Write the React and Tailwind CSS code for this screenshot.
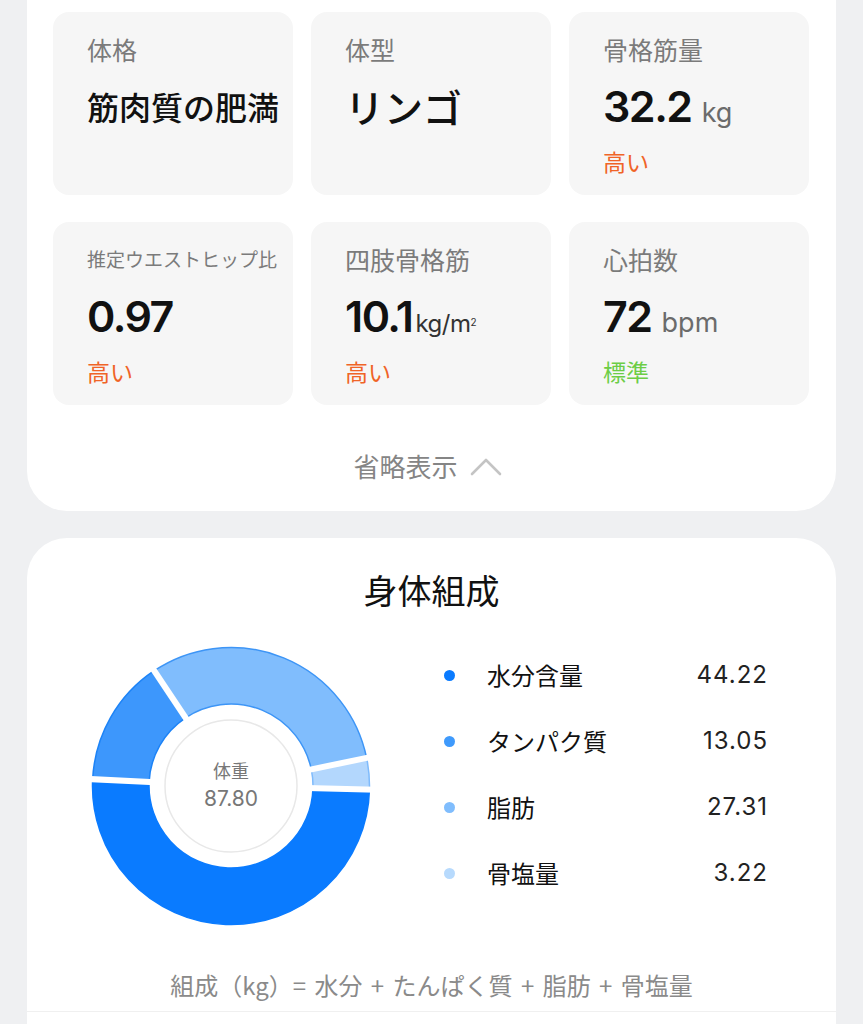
import React from "react"

// font stacks (full class names so tailwind picks them up)
const JP = "font-['Noto_Sans_CJK_JP','Noto_Sans',sans-serif]"
const NUM = "font-['Inter','Noto_Sans_CJK_JP',sans-serif]"

const tiles = [
  { label: "体格", value: <span className={`${JP} text-[32px] font-medium`}>筋肉質の肥満</span> },
  { label: "体型", value: <span className={`${JP} text-[39px] font-medium`}>リンゴ</span> },
  {
    label: "骨格筋量",
    value: (
      <>
        <span className={`${NUM} text-[43px] font-semibold tracking-[-1.5px]`}>32.2</span>
        <span className={`${NUM} ml-[10px] text-[27px] text-[#6b6b6b]`}>kg</span>
      </>
    ),
    status: "高い",
    high: true,
  },
  {
    label: "推定ウエストヒップ比",
    small: true,
    value: <span className={`${NUM} text-[43px] font-semibold tracking-[-1.5px]`}>0.97</span>,
    status: "高い",
    high: true,
  },
  {
    label: "四肢骨格筋",
    value: (
      <>
        <span className={`${NUM} text-[43px] font-semibold tracking-[-1.5px]`}>10.1</span>
        <span className={`${NUM} ml-[3px] text-[24px] text-[#333] tracking-[-0.5px]`}>
          kg/m<sup className="text-[10px] relative -top-[6px]">2</sup>
        </span>
      </>
    ),
    status: "高い",
    high: true,
  },
  {
    label: "心拍数",
    value: (
      <>
        <span className={`${NUM} text-[43px] font-semibold tracking-[-1.5px]`}>72</span>
        <span className={`${NUM} ml-[10px] text-[27px] text-[#6b6b6b]`}>bpm</span>
      </>
    ),
    status: "標準",
    high: false,
  },
]

const segs = [
  { name: "水分含量", v: 44.22, fill: "#0a7bff", stroke: "#0a7bff", dot: "bg-[#0a7bff]" },
  { name: "タンパク質", v: 13.05, fill: "#3d97fc", stroke: "#1c83f7", dot: "bg-[#3f9afc]" },
  { name: "脂肪", v: 27.31, fill: "#80bdfd", stroke: "#3d95f6", dot: "bg-[#80bdfd]" },
  { name: "骨塩量", v: 3.22, fill: "#b3d7fd", stroke: "#7fbbfc", dot: "bg-[#b7dafd]" },
]

function polar(r, deg) {
  const a = (deg * Math.PI) / 180
  return [145 + r * Math.cos(a), 145 + r * Math.sin(a)]
}

function arc(ro, ri, a0, a1) {
  const large = a1 - a0 > 180 ? 1 : 0
  const [x0, y0] = polar(ro, a0)
  const [x1, y1] = polar(ro, a1)
  const [x2, y2] = polar(ri, a1)
  const [x3, y3] = polar(ri, a0)
  return `M${x0} ${y0} A${ro} ${ro} 0 ${large} 1 ${x1} ${y1} L${x2} ${y2} A${ri} ${ri} 0 ${large} 0 ${x3} ${y3} Z`
}

function Donut() {
  const total = segs.reduce((s, x) => s + x.v, 0)
  let a = 1.5
  const parts = segs.map((s) => {
    const a0 = a
    const a1 = a + (s.v / total) * 360
    a = a1
    return { ...s, a0, a1 }
  })
  return (
    <svg width="290" height="290" viewBox="0 0 290 290">
      {parts.map((p) => (
        <path key={p.name} d={arc(138.5, 82, p.a0, p.a1)} fill={p.fill} stroke={p.stroke} strokeWidth="1.5" />
      ))}
      {/* white gaps between slices */}
      {parts.map((p) => {
        const [x0, y0] = polar(76, p.a0)
        const [x1, y1] = polar(146, p.a0)
        return <line key={"g" + p.name} x1={x0} y1={y0} x2={x1} y2={y1} stroke="#fff" strokeWidth="6" />
      })}
      <circle cx="145" cy="145" r="66" fill="#fff" stroke="#e8e8e8" strokeWidth="1.5" />
      <text x="145" y="137" textAnchor="middle" fontSize="18" fill="#777" className={JP}>体重</text>
      <text x="145" y="165" textAnchor="middle" fontSize="21" fill="#777" className={NUM}>87.80</text>
    </svg>
  )
}

function Tile({ t }) {
  return (
    <div className="h-[183px] rounded-[16px] bg-[#f6f6f6] pl-[34px] pt-[22px] flex flex-col">
      <div className={`h-[30px] leading-[30px] text-[#7b7b7b] ${t.small ? "text-[19px]" : "text-[25px]"}`}>
        {t.label}
      </div>
      <div className="mt-[17px] h-[50px] leading-[50px] text-[#111] whitespace-nowrap">{t.value}</div>
      {t.status && (
        <div className={`mt-[15px] h-[30px] leading-[30px] text-[23px] ${t.high ? "text-[#f06427]" : "text-[#6ccd45]"}`}>
          {t.status}
        </div>
      )}
    </div>
  )
}

export default function App() {
  return (
    <div className={`${JP} min-h-screen bg-[#eff0f2] px-[27px] pb-10`}>
      {/* metrics card */}
      <div className="bg-white rounded-b-[40px] px-[26px] pt-3 pb-[30px]">
        <div className="grid grid-cols-3 gap-x-[18px] gap-y-[27px] pr-px">
          {tiles.map((t) => (
            <Tile key={t.label} t={t} />
          ))}
        </div>
        <div className="mt-[46px] h-[30px] flex items-center justify-center gap-[12px] pr-[8px]">
          <span className="text-[26px] leading-[30px] text-[#858585]">省略表示</span>
          <svg width="32" height="20" viewBox="0 0 32 20" fill="none">
            <path d="M2 18 L16 4 L30 18" stroke="#c4c4c4" strokeWidth="2.6" strokeLinecap="round" strokeLinejoin="round" />
          </svg>
        </div>
      </div>

      {/* body composition card */}
      <div className="mt-[27px] bg-white rounded-t-[40px] pt-[27px]">
        <div className="h-[50px] leading-[50px] text-center text-[34px] text-[#111]">身体組成</div>
        <div className="mt-[26px] flex">
          <div className="ml-[59px]">
            <Donut />
          </div>
          <div className="ml-[68px] w-[324px] pt-px">
            {segs.map((s) => (
              <div key={s.name} className="h-[66px] flex items-center">
                <span className={`w-[11px] h-[11px] rounded-full ${s.dot}`} />
                <span className="ml-[32px] text-[24px] text-[#111]">{s.name}</span>
                <span className={`${NUM} ml-auto text-[24px] tracking-[1px] text-[#222]`}>{s.v.toFixed(2)}</span>
              </div>
            ))}
          </div>
        </div>
        <div className="mt-[39px] h-[30px] leading-[30px] text-center text-[24px] text-[#8a8a8a] [word-spacing:3px]">
          組成（kg）= 水分 + たんぱく質 + 脂肪 + 骨塩量
        </div>
        <div className="mt-[11px] border-t border-[#f0f0f0] h-[60px]" />
      </div>
    </div>
  )
}
